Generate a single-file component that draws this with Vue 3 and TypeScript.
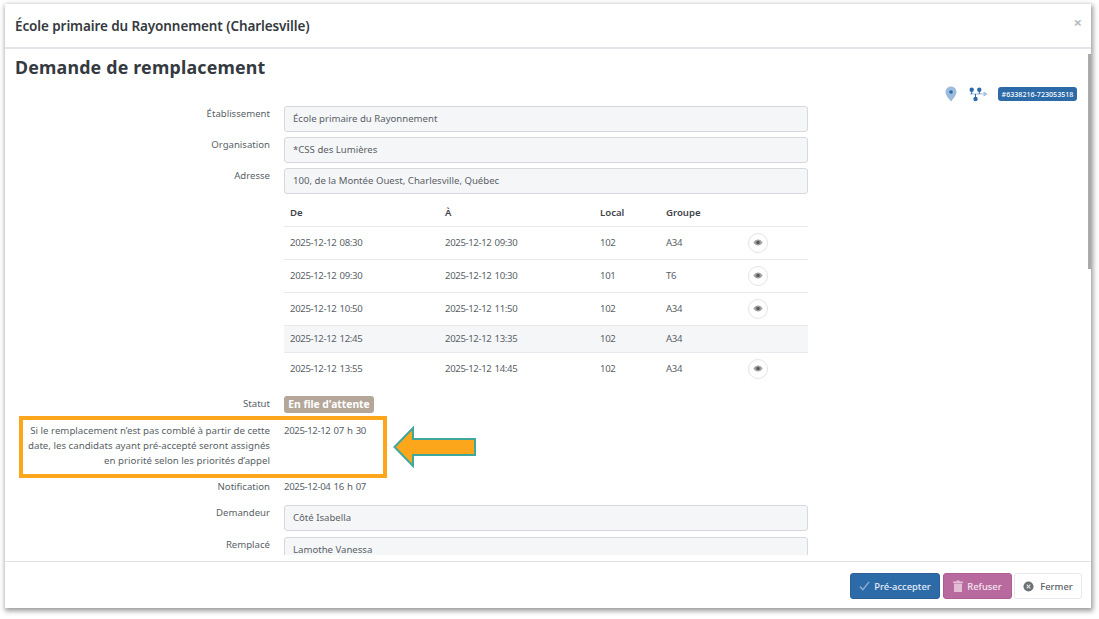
<script setup lang="ts">
interface Slot { from: string; to: string; room: string; group: string; eye: boolean; muted?: boolean }
const slots: Slot[] = [
  { from: '2025-12-12 08:30', to: '2025-12-12 09:30', room: '102', group: 'A34', eye: true },
  { from: '2025-12-12 09:30', to: '2025-12-12 10:30', room: '101', group: 'T6', eye: true },
  { from: '2025-12-12 10:50', to: '2025-12-12 11:50', room: '102', group: 'A34', eye: true },
  { from: '2025-12-12 12:45', to: '2025-12-12 13:35', room: '102', group: 'A34', eye: false, muted: true },
  { from: '2025-12-12 13:55', to: '2025-12-12 14:45', room: '102', group: 'A34', eye: true },
]
</script>

<template>
  <div class="page">
    <section class="modal">
      <header class="head">
        <h1>École primaire du Rayonnement (Charlesville)</h1>
        <span class="close">×</span>
      </header>
      <div class="body">
        <h2>Demande de remplacement</h2>
        <div class="meta">
          <svg class="pin" width="12" height="16" viewBox="0 0 12 16">
            <path d="M6 0.5C2.9 0.5 0.5 2.9 0.5 6C0.5 9.6 4.6 13.6 6 15.5C7.4 13.6 11.5 9.6 11.5 6C11.5 2.9 9.1 0.5 6 0.5Z" fill="#9dbcdc" />
            <circle cx="6" cy="6" r="1.8" fill="#2d6aa8" />
          </svg>
          <svg class="net" width="19" height="15" viewBox="0 0 19 15">
            <path d="M1 7H16.5M14.5 5L17.5 7L14.5 9" fill="none" stroke="#9dbcdc" stroke-width="1.1" />
            <path d="M2.7 2.7V7M10.3 2.7V7M6.5 7V12" stroke="#2d6aa8" stroke-width="1" />
            <circle cx="2.7" cy="2.7" r="2.2" fill="#2d6aa8" />
            <circle cx="10.3" cy="2.7" r="2.2" fill="#2d6aa8" />
            <circle cx="6.5" cy="12" r="2.2" fill="#2d6aa8" />
          </svg>
          <span class="ref">#6338216-723053518</span>
        </div>

        <div class="form">
          <label>Établissement</label>
          <div class="input">École primaire du Rayonnement</div>
          <label>Organisation</label>
          <div class="input">*CSS des Lumières</div>
          <label>Adresse</label>
          <div class="input">100, de la Montée Ouest, Charlesville, Québec</div>

          <table class="slots">
            <thead>
              <tr><th>De</th><th>À</th><th>Local</th><th>Groupe</th><th></th></tr>
            </thead>
            <tbody>
              <tr v-for="s in slots" :key="s.from" :class="{ muted: s.muted }">
                <td>{{ s.from }}</td>
                <td>{{ s.to }}</td>
                <td>{{ s.room }}</td>
                <td>{{ s.group }}</td>
                <td>
                  <span v-if="s.eye" class="eye">
                    <svg width="10" height="7" viewBox="0 0 11 8">
                      <path d="M0.3 4C1.6 1.7 3.4 0.5 5.5 0.5C7.6 0.5 9.4 1.7 10.7 4C9.4 6.3 7.6 7.5 5.5 7.5C3.4 7.5 1.6 6.3 0.3 4Z" fill="#a2a2a2" />
                      <circle cx="5.5" cy="4" r="2" fill="#55595d" />
                    </svg>
                  </span>
                </td>
              </tr>
            </tbody>
          </table>

          <label class="l-status">Statut</label>
          <div class="status-cell"><span class="status">En file d'attente</span></div>
          <label class="l-long">Si le remplacement n’est pas comblé à partir de cette date, les candidats ayant pré-accepté seront assignés en priorité selon les priorités d’appel</label>
          <div class="plain long">2025-12-12 07 h 30</div>
          <label class="l-notif">Notification</label>
          <div class="plain notif">2025-12-04 16 h 07</div>
          <label class="l-dem">Demandeur</label>
          <div class="input dem">Côté Isabella</div>
          <label class="l-rem">Remplacé</label>
          <div class="input rem">Lamothe Vanessa</div>
        </div>
        <div class="scrollbar"></div>
      </div>
      <footer class="foot">
        <button class="btn primary">
          <svg width="11" height="10" viewBox="0 0 12 11"><path d="M1 6L4.2 9.5L11 1" fill="none" stroke="#8fb2d6" stroke-width="1.5" /></svg>
          Pré-accepter
        </button>
        <button class="btn danger">
          <svg width="10" height="12" viewBox="0 0 10 12"><path d="M0 1.6H3L3.6 0.4H6.4L7 1.6H10V3H0ZM1 3.6H9V12H1Z" fill="#e3bcd6" /></svg>
          Refuser
        </button>
        <button class="btn ghost">
          <svg width="11" height="11" viewBox="0 0 12 12"><circle cx="6" cy="6" r="5.5" fill="#6d7276" /><path d="M4 4L8 8M8 4L4 8" stroke="#e6e6e6" stroke-width="1.2" /></svg>
          Fermer
        </button>
      </footer>
    </section>

    <div class="callout"></div>
    <svg class="arrow" width="85" height="42" viewBox="0 0 85 42">
      <path d="M2.5 21L21 2V13H83V29H21V40Z" fill="#fca61c" stroke="#3fa79b" stroke-width="2" />
    </svg>
  </div>
</template>

<style scoped>
.page {
  position: relative;
  width: 1099px;
  height: 619px;
  padding: 4px 8px 11px 5px;
  box-sizing: border-box;
  background: #fff;
  font-family: "Noto Sans", "Open Sans", sans-serif;
  color: #5a5f66;
  overflow: hidden;
}
.modal {
  height: 100%;
  display: flex;
  flex-direction: column;
  background: #fff;
  box-shadow: 1px 2px 5px 1px rgba(0, 0, 0, 0.4);
}
.head {
  height: 43px;
  flex: none;
  display: flex;
  align-items: center;
  justify-content: space-between;
  padding: 0 9px 0 10px;
  border-bottom: 2px solid #e3e4e8;
}
h1 {
  margin: 0;
  font-size: 13.5px;
  font-weight: 600;
  letter-spacing: -0.1px;
  color: #343a40;
}
.close {
  margin-top: -6px;
  font-size: 15px;
  font-weight: 700;
  color: #b9bdc2;
  line-height: 1;
}
.body {
  position: relative;
  flex: 1;
  min-height: 0;
  overflow: hidden;
  margin-bottom: 6px;
  padding: 0 10px;
}
h2 {
  margin: 6px 0 0;
  font-size: 17.8px;
  line-height: 24px;
  font-weight: 700;
  color: #343a40;
  letter-spacing: 0.2px;
}
.meta {
  position: absolute;
  top: 37px;
  right: 14px;
  display: flex;
  align-items: center;
}
.pin { margin-right: 12px; }
.net { margin-right: 10px; }
.ref {
  width: 79px;
  height: 14px;
  border-radius: 3px;
  background: #2d6aa8;
  color: #fff;
  font-size: 7.1px;
  line-height: 14px;
  text-align: center;
  font-weight: 500;
  white-space: nowrap;
}
.form {
  display: grid;
  grid-template-columns: 255px 524px;
  column-gap: 14px;
  margin-top: 27px;
  font-size: 9.6px;
}
label {
  text-align: right;
  line-height: 15px;
  color: #5a5f66;
}
.input {
  height: 26px;
  box-sizing: border-box;
  margin-bottom: 5px;
  padding: 0 8px;
  line-height: 23px;
  background: #f5f6f8;
  border: 1px solid #d5d8de;
  border-radius: 3px;
  color: #5a5f66;
}
.slots {
  grid-column: 2;
  width: 524px;
  border-collapse: collapse;
  table-layout: fixed;
}
th:nth-child(1) { width: 155px; }
th:nth-child(2) { width: 155px; }
th:nth-child(3) { width: 66px; }
th:nth-child(4) { width: 82px; }
th {
  height: 27px;
  padding: 0 0 0 6px;
  text-align: left;
  font-weight: 600;
  color: #3f444a;
  border-bottom: 1px solid #e8e9ec;
  box-sizing: border-box;
}
td {
  height: 33px;
  padding: 0 0 0 6px;
  letter-spacing: -0.36px;
  word-spacing: 1px;
  border-bottom: 1px solid #e8e9ec;
  box-sizing: border-box;
}
tr:last-child td { border-bottom: 0; }
tr.muted td {
  height: 27px;
  background: #f5f6f8;
}
.eye {
  display: flex;
  align-items: center;
  justify-content: center;
  width: 20px;
  height: 20px;
  box-sizing: border-box;
  border: 1px solid #e3e4e9;
  border-radius: 50%;
  background: #fff;
}
.l-status { margin-top: 11px; }
.status-cell { display: flex; margin-top: 11px; height: 17px; }
.status {
  width: 90px;
  height: 17px;
  border-radius: 3px;
  background: #b4a79a;
  color: #fff;
  font-size: 10.3px;
  line-height: 17px;
  text-align: center;
  font-weight: 700;
  white-space: nowrap;
}
.l-long { margin-top: 10px; padding-left: 12px; font-size: 9.7px; }
.plain { line-height: 15px; letter-spacing: -0.36px; word-spacing: 1px; }
.long { margin-top: 10px; }
.l-notif, .notif { margin-top: 11px; }
.l-dem, .dem { margin-top: 11px; }
.rem { margin-top: 1px; }
.l-rem { margin-top: 1px; }
.scrollbar {
  position: absolute;
  top: 5px;
  right: 0;
  width: 3px;
  height: 215px;
  background: #aaa;
}
.foot {
  height: 47px;
  flex: none;
  box-sizing: border-box;
  display: flex;
  justify-content: flex-end;
  align-items: flex-start;
  gap: 2px;
  padding: 11px 9px 0 0;
  border-top: 1px solid #e3e4e8;
}
.btn {
  display: inline-flex;
  align-items: center;
  justify-content: center;
  gap: 4px;
  height: 26px;
  padding: 0;
  border-radius: 3px;
  font-family: inherit;
  font-size: 9.4px;
  font-weight: 500;
  border: 1px solid transparent;
}
.primary { width: 90px; background: #2d6aa8; border-color: #2a5f97; color: #e6eef7; }
.danger { width: 69px; margin-left: 1px; background: #b86a9f; border-color: #ad5f94; color: #f5e5f0; }
.ghost { width: 68px; gap: 6px; background: #fff; border-color: #e6e8ee; color: #5a5f66; }
.callout {
  position: absolute;
  left: 19px;
  top: 416px;
  width: 368px;
  height: 62px;
  box-sizing: border-box;
  border: 4px solid #fca61c;
}
.arrow {
  position: absolute;
  left: 392px;
  top: 426px;
}
</style>
